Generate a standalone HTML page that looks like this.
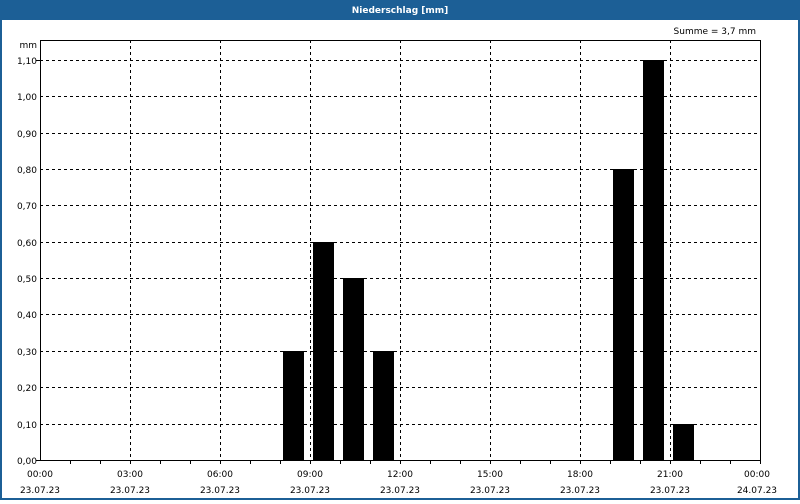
<!DOCTYPE html><html><head><style>
body{margin:0;width:800px;height:500px;overflow:hidden;background:#fff;font-family:"DejaVu Sans","Liberation Sans",sans-serif;}
</style></head><body>
<svg width="800" height="500" xmlns="http://www.w3.org/2000/svg" font-family="DejaVu Sans, Liberation Sans, sans-serif" font-size="9">
<rect x="0" y="0" width="800" height="500" fill="#fff"/>
<rect x="0" y="0" width="800" height="20" fill="#1c5f96"/>
<rect x="0" y="0" width="2" height="500" fill="#1c5f96"/>
<rect x="798" y="0" width="2" height="500" fill="#1c5f96"/>
<rect x="0" y="498" width="800" height="2" fill="#1c5f96"/>
<text x="400" y="13" fill="#fff" font-weight="bold" text-anchor="middle">Niederschlag [mm]</text>
<text x="756" y="34" text-anchor="end" fill="#000">Summe = 3,7 mm</text>
<text x="37" y="48" text-anchor="end">mm</text>
<g stroke="#000" stroke-dasharray="3,3" stroke-width="1">
<line x1="40" y1="60.5" x2="760" y2="60.5"/><line x1="40" y1="96.5" x2="760" y2="96.5"/><line x1="40" y1="133.5" x2="760" y2="133.5"/><line x1="40" y1="169.5" x2="760" y2="169.5"/><line x1="40" y1="205.5" x2="760" y2="205.5"/><line x1="40" y1="242.5" x2="760" y2="242.5"/><line x1="40" y1="278.5" x2="760" y2="278.5"/><line x1="40" y1="314.5" x2="760" y2="314.5"/><line x1="40" y1="351.5" x2="760" y2="351.5"/><line x1="40" y1="387.5" x2="760" y2="387.5"/><line x1="40" y1="424.5" x2="760" y2="424.5"/>
<line x1="130.5" y1="40" x2="130.5" y2="460"/><line x1="220.5" y1="40" x2="220.5" y2="460"/><line x1="310.5" y1="40" x2="310.5" y2="460"/><line x1="400.5" y1="40" x2="400.5" y2="460"/><line x1="490.5" y1="40" x2="490.5" y2="460"/><line x1="580.5" y1="40" x2="580.5" y2="460"/><line x1="670.5" y1="40" x2="670.5" y2="460"/>
</g>
<g fill="#000">
<rect x="283" y="351" width="21" height="109"/>
<rect x="313" y="242" width="21" height="218"/>
<rect x="343" y="278" width="21" height="182"/>
<rect x="373" y="351" width="21" height="109"/>
<rect x="613" y="169" width="21" height="291"/>
<rect x="643" y="60" width="21" height="400"/>
<rect x="673" y="424" width="21" height="36"/>
</g>
<rect x="40.5" y="40.5" width="720" height="420" fill="none" stroke="#000"/>
<g stroke="#000">
<path d="M70.5 460v4M100.5 460v4M130.5 460v4M160.5 460v4M190.5 460v4M220.5 460v4M250.5 460v4M280.5 460v4M310.5 460v4M340.5 460v4M370.5 460v4M400.5 460v4M430.5 460v4M460.5 460v4M490.5 460v4M520.5 460v4M550.5 460v4M580.5 460v4M610.5 460v4M640.5 460v4M670.5 460v4M700.5 460v4M730.5 460v4M760.5 460v4M36 460.5h4M36 60.5h4"/>
</g>
<g text-anchor="end">
<text x="37" y="64">1,10</text><text x="37" y="100">1,00</text><text x="37" y="137">0,90</text><text x="37" y="173">0,80</text><text x="37" y="209">0,70</text><text x="37" y="246">0,60</text><text x="37" y="282">0,50</text><text x="37" y="318">0,40</text><text x="37" y="355">0,30</text><text x="37" y="391">0,20</text><text x="37" y="428">0,10</text><text x="37" y="464">0,00</text>
</g>
<g text-anchor="middle">
<text x="40" y="477">00:00</text><text x="40" y="493">23.07.23</text>
<text x="130" y="477">03:00</text><text x="130" y="493">23.07.23</text>
<text x="220" y="477">06:00</text><text x="220" y="493">23.07.23</text>
<text x="310" y="477">09:00</text><text x="310" y="493">23.07.23</text>
<text x="400" y="477">12:00</text><text x="400" y="493">23.07.23</text>
<text x="490" y="477">15:00</text><text x="490" y="493">23.07.23</text>
<text x="580" y="477">18:00</text><text x="580" y="493">23.07.23</text>
<text x="670" y="477">21:00</text><text x="670" y="493">23.07.23</text>
<text x="757" y="477">00:00</text><text x="757" y="493">24.07.23</text>
</g>
</svg>
</body></html>
